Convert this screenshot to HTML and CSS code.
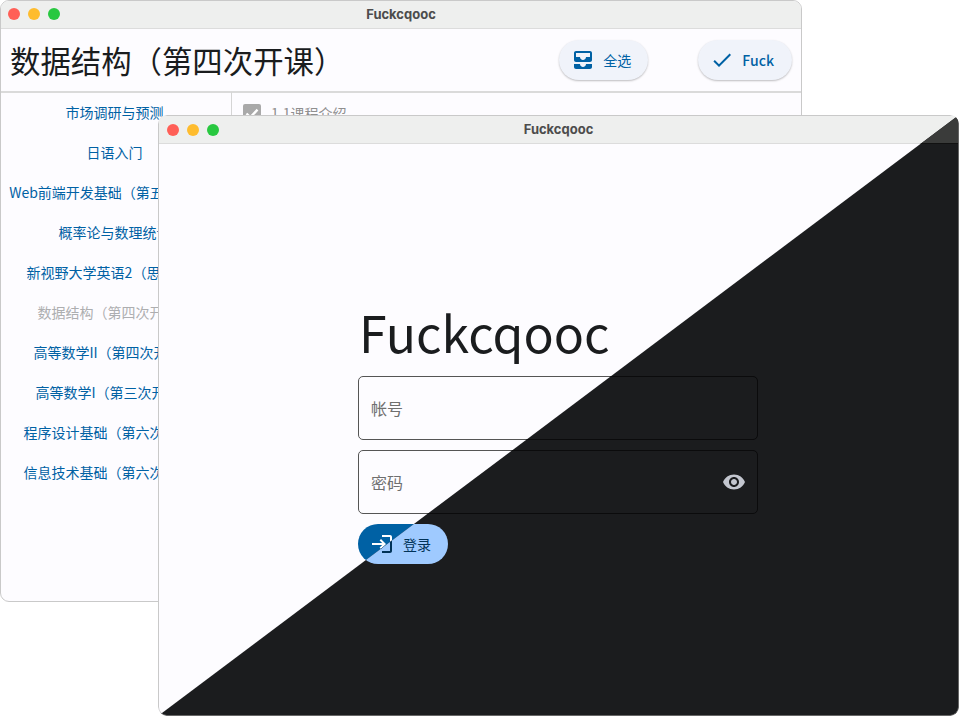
FILE: index.html
```html
<!DOCTYPE html>
<html lang="en">

<head>
    <meta charset="UTF-8">
    <meta name="viewport" content="width=device-width, initial-scale=1.0">
    <title>Fuckcqooc</title>

    <link rel="stylesheet" href="styles.css">

</head>

<body>
    <!-- back window: course list -->
    <div class="window window-back">
        <div class="titlebar">
            <div class="lights"><span class="red"></span><span class="yellow"></span><span class="green"></span></div>
            <span class="titlebar-text">Fuckcqooc</span>
        </div>
        <div class="course-header">
            <h1>数据结构（第四次开课）</h1>
            <div class="actions">
                <button class="pill select-all">
                    <svg viewBox="0 0 24 24" width="24" height="24"><path d="M19 3H5c-1.1 0-2 .9-2 2v7c0 1.1.9 2 2 2h14c1.1 0 2-.9 2-2V5c0-1.1-.9-2-2-2zm0 6h-4c0 1.62-1.38 3-3 3s-3-1.38-3-3H5V5h14v4zm-4 7h6v3c0 1.1-.9 2-2 2H5c-1.1 0-2-.9-2-2v-3h6c0 1.66 1.34 3 3 3s3-1.34 3-3z"/></svg>
                    全选
                </button>
                <button class="pill fuck">
                    <svg viewBox="0 0 24 24" width="24" height="24"><path d="M9 16.17L4.83 12l-1.42 1.41L9 19 21 7l-1.41-1.41z"/></svg>
                    Fuck
                </button>
            </div>
        </div>
        <div class="course-body">
            <ul class="course-list">
                <li>市场调研与预测</li>
                <li>日语入门</li>
                <li>Web前端开发基础（第五次开课）</li>
                <li>概率论与数理统计</li>
                <li>新视野大学英语2（思政版）</li>
                <li class="current">数据结构（第四次开课）</li>
                <li>高等数学II（第四次开课）</li>
                <li>高等数学I（第三次开课）</li>
                <li>程序设计基础（第六次开课）</li>
                <li>信息技术基础（第六次开课）</li>
            </ul>
            <div class="lesson-list">
                <div class="lesson">
                    <span class="checkbox">
                        <svg viewBox="0 0 18 18" width="18" height="18"><path d="M3.5 9.5l3.8 3.8 7.2-7.6" fill="none" stroke="#fff" stroke-width="2.4"/></svg>
                    </span>
                    1.1课程介绍
                </div>
            </div>
        </div>
    </div>

    <!-- front window: login, light and dark split on the diagonal -->
    <div class="window window-front">
        <div class="theme theme-light">
            <div class="titlebar">
                <div class="lights"><span class="red"></span><span class="yellow"></span><span class="green"></span></div>
                <span class="titlebar-text">Fuckcqooc</span>
            </div>
            <div class="login">
                <div class="login-title">Fuckcqooc</div>
                <div class="field">帐号</div>
                <div class="field">密码
                    <svg viewBox="0 0 24 24" width="24" height="24"><path d="M12 4.5C7 4.5 2.73 7.61 1 12c1.73 4.39 6 7.5 11 7.5s9.27-3.11 11-7.5c-1.73-4.39-6-7.5-11-7.5zM12 17c-2.76 0-5-2.24-5-5s2.24-5 5-5 5 2.24 5 5-2.24 5-5 5zm0-8c-1.66 0-3 1.34-3 3s1.34 3 3 3 3-1.34 3-3-1.34-3-3-3z"/></svg>
                </div>
                <button class="login-btn">
                    <svg viewBox="0 0 24 24" width="24" height="24"><path d="M11 7L9.6 8.4l2.6 2.6H2v2h10.2l-2.6 2.6L11 17l5-5-5-5zm9 12h-8v2h8c1.1 0 2-.9 2-2V5c0-1.1-.9-2-2-2h-8v2h8v14z"/></svg>
                    登录
                </button>
            </div>
        </div>
        <div class="theme theme-dark">
            <div class="titlebar">
                <div class="lights"><span class="red"></span><span class="yellow"></span><span class="green"></span></div>
                <span class="titlebar-text">Fuckcqooc</span>
            </div>
            <div class="login">
                <div class="login-title">Fuckcqooc</div>
                <div class="field">帐号</div>
                <div class="field">密码
                    <svg viewBox="0 0 24 24" width="24" height="24"><path d="M12 4.5C7 4.5 2.73 7.61 1 12c1.73 4.39 6 7.5 11 7.5s9.27-3.11 11-7.5c-1.73-4.39-6-7.5-11-7.5zM12 17c-2.76 0-5-2.24-5-5s2.24-5 5-5 5 2.24 5 5-2.24 5-5 5zm0-8c-1.66 0-3 1.34-3 3s1.34 3 3 3 3-1.34 3-3-1.34-3-3-3z"/></svg>
                </div>
                <button class="login-btn">
                    <svg viewBox="0 0 24 24" width="24" height="24"><path d="M11 7L9.6 8.4l2.6 2.6H2v2h10.2l-2.6 2.6L11 17l5-5-5-5zm9 12h-8v2h8c1.1 0 2-.9 2-2V5c0-1.1-.9-2-2-2h-8v2h8v14z"/></svg>
                    登录
                </button>
            </div>
        </div>
    </div>
</body>
</html>
```

FILE: styles.css
```css
html, body {
    height: 100%;
}

body {
    margin: 0;
    position: relative;
    overflow: hidden;
    background-color: #fff;
    font-family: "Noto Sans CJK SC", "Noto Sans", sans-serif;
    color: #1a1c1e;
}

/* Windows sit on a free desktop */
.window {
    position: absolute;
    box-sizing: border-box;
    overflow: hidden;
    border-radius: 9px;
    background-color: #fdfcff;
}

.window-back {
    left: 0;
    top: 0;
    width: 802px;
    height: 602px;
    display: flex;
    flex-direction: column;
    border: 1px solid #c9c9c9;
}

.window-front {
    left: 158px;
    top: 115px;
    width: 801px;
    height: 601px;
}

.titlebar {
    height: 25px;
    padding-bottom: 2px;
    flex: none;
    display: flex;
    align-items: center;
    justify-content: center;
    position: relative;
    background-color: #eeefee;
    border-bottom: 1px solid #dcdcdc;
}

.titlebar-text {
    font-family: "Inter", sans-serif;
    font-size: 13px;
    font-weight: 700;
    color: #4c4c4c;
}

.lights {
    position: absolute;
    left: 8px;
    top: 8px;
    display: flex;
    gap: 8px;
}

.window-back .lights {
    left: 7px;
    top: 7px;
}

.lights span {
    width: 12px;
    height: 12px;
    border-radius: 50%;
}

.red { background-color: #ff5f57; }
.yellow { background-color: #febc2e; }
.green { background-color: #28c840; }

.course-header {
    height: 62px;
    flex: none;
    display: flex;
    align-items: center;
    justify-content: space-between;
    padding: 0 9px;
    border-bottom: 2px solid #dadada;
}

h1 {
    margin: 0;
    font-size: 30.4px;
    font-weight: 400;
}

.actions {
    display: flex;
    gap: 50px;
}

.pill {
    height: 40px;
    display: flex;
    align-items: center;
    gap: 8px;
    padding: 0 17px 0 12px;
    border: none;
    border-radius: 20px;
    background-color: #f0f3fa;
    box-shadow: 0 1px 2px rgba(0, 0, 0, 0.25);
    color: #0061a4;
    font-family: inherit;
    font-size: 14px;
    font-weight: 400;
}

.pill.fuck {
    padding-right: 18px;
    font-weight: 500;
}

.pill svg {
    fill: #0061a4;
}

.course-body {
    flex: 1;
    display: flex;
    min-height: 0;
}

.course-list {
    width: 231px;
    flex: none;
    box-sizing: border-box;
    margin: -1px 0 0;
    padding: 0 3px 0 0;
    list-style: none;
    border-right: 1px solid #d5d5d5;
}

.course-list li {
    height: 40px;
    display: flex;
    align-items: center;
    justify-content: center;
    white-space: nowrap;
    font-size: 14px;
    font-weight: 400;
    color: #0061a4;
}

.course-list li.current {
    color: #adaeb0;
}

.lesson-list {
    padding: 10px 11px;
}

.lesson {
    display: flex;
    align-items: center;
    gap: 10px;
    font-size: 14px;
    color: #8f8f8f;
}

.checkbox {
    width: 18px;
    height: 18px;
    display: block;
    border-radius: 2px;
    background-color: #a9a9a9;
}

/* Front window: same login drawn twice, the dark one cut along the diagonal */
.theme {
    position: absolute;
    inset: 0;
    box-sizing: border-box;
    display: flex;
    flex-direction: column;
    border: 1px solid #c9c9c9;
    border-radius: 9px;
}

.theme-light {
    background-color: #fdfcff;
}

.theme-dark {
    background-color: #1b1c1e;
    border-color: #666;
    clip-path: polygon(100% 0, 100% 100%, 0 100%);
}

.theme-dark .titlebar {
    background-color: #3a3b3a;
    border-bottom-color: #111;
}

.login {
    flex: 1;
    width: 400px;
    align-self: center;
    margin-right: 1px;
    padding-bottom: 1px;
    display: flex;
    flex-direction: column;
    justify-content: center;
    align-items: flex-start;
    gap: 10px;
}

.login-title {
    font-size: 50px;
    line-height: 72px;
    margin-left: 1px;
    margin-bottom: -1px;
    font-weight: 400;
    color: #1a1c1e;
}

.field {
    width: 100%;
    height: 64px;
    box-sizing: border-box;
    display: flex;
    align-items: center;
    justify-content: space-between;
    padding: 0 11px 0 12px;
    border: 1px solid #555;
    border-radius: 5px;
    font-size: 16px;
    color: #6f6f6f;
}

.theme-dark .field {
    border-color: #0b0b0c;
    color: #c3c6cf;
}

.field svg {
    fill: #43474e;
}

.theme-dark .field svg {
    fill: #c3c6cf;
}

.login-btn {
    height: 40px;
    display: flex;
    align-items: center;
    gap: 9px;
    padding: 0 17px 0 12px;
    border: none;
    border-radius: 20px;
    background-color: #0061a4;
    color: #fff;
    font-family: inherit;
    font-size: 14px;
    font-weight: 400;
}

.login-btn svg {
    fill: #fff;
}

.theme-dark .login-btn {
    background-color: #9fcaff;
    color: #003258;
}

.theme-dark .login-btn svg {
    fill: #003258;
}
```
